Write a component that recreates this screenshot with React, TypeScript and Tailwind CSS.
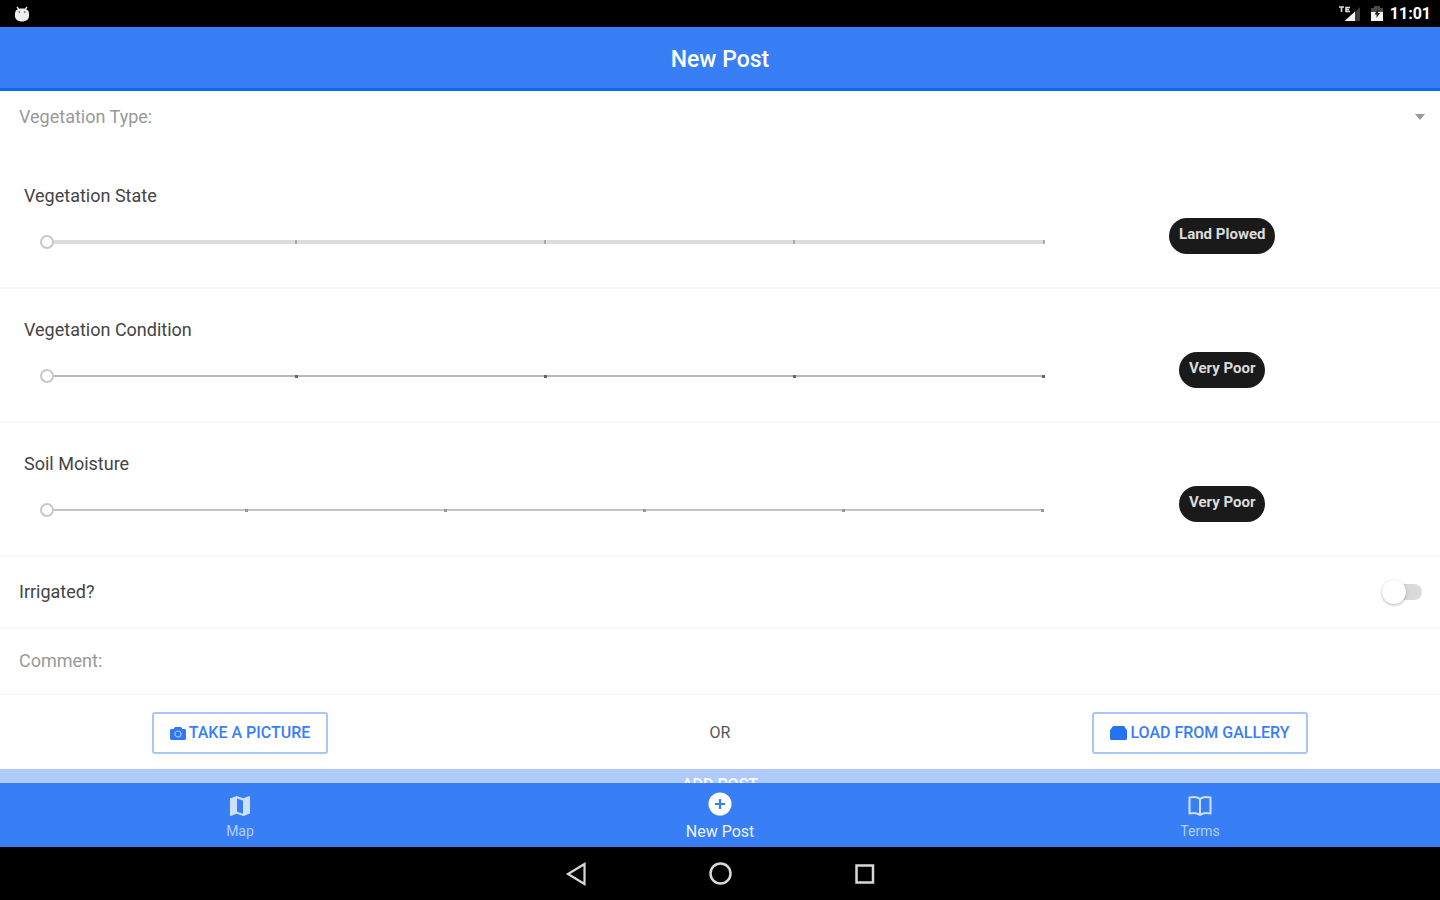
import React, { useState } from 'react';

type SliderRowProps = {
  id: string;
  label: string;
  values: string[];
  trackClass: string;
  tickClass: string;
};

const SliderRow = ({ id, label, values, trackClass, tickClass }: SliderRowProps) => {
  const [value, setValue] = useState(0);

  return (
    <div className="grid h-[134px] grid-cols-[3fr_1fr] border-b-2 border-[#f7f7f7] pr-[46px] pl-5">
      <div className="pt-[27px]">
        <label htmlFor={id} className="block pl-1 text-lg leading-7 text-[#444]">
          {label}
        </label>
        <div className="relative mt-[18px] ml-5 flex h-7 items-center">
          <div className={trackClass}></div>
          <div className="absolute inset-x-[6px] flex items-center justify-between">
            {values.map((_, index) => (
              <span key={index} className={tickClass}></span>
            ))}
          </div>
          <input
            id={id}
            type="range"
            min={0}
            max={values.length - 1}
            value={value}
            onChange={(e) => setValue(Number(e.target.value))}
            className="relative m-0 h-7 w-full appearance-none bg-transparent outline-none [&::-webkit-slider-thumb]:h-[14px] [&::-webkit-slider-thumb]:w-[14px] [&::-webkit-slider-thumb]:appearance-none [&::-webkit-slider-thumb]:rounded-full [&::-webkit-slider-thumb]:border-2 [&::-webkit-slider-thumb]:border-[#c8c8c8] [&::-webkit-slider-thumb]:bg-white"
          />
        </div>
      </div>
      <div className="flex justify-center pt-[63px]">
        <output
          htmlFor={id}
          className="h-9 rounded-full bg-[#1a1a1a] px-[10px] text-[15px] leading-[33px] font-bold text-[#dcdcdc]"
        >
          {values[value]}
        </output>
      </div>
    </div>
  );
};

const StatusBar = () => (
  <div className="flex h-[27px] shrink-0 items-center justify-between bg-black pr-[9px] pl-[14px] text-white">
    <svg width="16" height="16" viewBox="0 0 16 16">
      <path d="M3 1l2 2.6M13 1l-2 2.6" stroke="#eee" strokeWidth="1.4" />
      <path d="M1 7.5C1 4.5 3.5 2.5 8 2.5s7 2 7 5V10c0 3-2.5 5.500-7 5.500S1 13 1 10z" fill="#eee" />
      <circle cx="5.3" cy="6" r="0.9" fill="#777" />
      <circle cx="10.7" cy="6" r="0.9" fill="#777" />
    </svg>
    <div className="flex items-center">
      <svg width="22" height="17" viewBox="0 0 22 17">
        <path d="M21 2v14H7z" fill="#3c3c3c" />
        <path d="M16 6.500V16H5.500z" fill="#f2f2f2" />
        <path d="M0 2h5M2.500 2v5M11 2.500H7v4H11M7 4.500h3" stroke="#ddd" strokeWidth="1.6" fill="none" />
      </svg>
      <svg width="14" height="17" viewBox="0 0 14 17" className="ml-[9px]">
        <path d="M4 1h6v2h3v6H1V3h3z" fill="#4a4a4a" />
        <path d="M1 7h12v9H1z" fill="#f5f5f5" />
        <path d="M8 4L4.500 9.500h2V13l3.500-5H8z" fill="#222" />
      </svg>
      <span className="ml-[6px] text-base leading-6 font-bold">11:01</span>
    </div>
  </div>
);

const TabBar = () => (
  <nav className="grid h-16 shrink-0 grid-cols-3 bg-[#387ef5] text-sm leading-4 text-[#b4cffb]">
    <a href="#map" className="flex flex-col items-center pt-3">
      <svg width="22" height="22" viewBox="0 0 22 22" fill="#cfe0fd">
        <path
          fillRule="evenodd"
          d="M1 3.5L7.5 1l7 2.200L20.200 1q.8-.2.8.6v17L14.500 21l-7-2.200L1.800 21q-.8.2-.8-.6zM8 3.600v13.200l6 2V5.400z"
        />
      </svg>
      <span className="mt-[6px]">Map</span>
    </a>
    <a href="#new" className="flex flex-col items-center pt-[9px] text-base leading-5 text-[#eef4ff]">
      <svg width="24" height="24" viewBox="0 0 24 24">
        <circle cx="12" cy="12" r="11.5" fill="#fff" />
        <path d="M12 7v10M7 12h10" stroke="#387ef5" strokeWidth="2.2" />
      </svg>
      <span className="mt-[6px]">New Post</span>
    </a>
    <a href="#terms" className="flex flex-col items-center pt-3">
      <svg width="24" height="22" viewBox="0 0 24 22" fill="none" stroke="#cfe0fd" strokeWidth="2" strokeLinejoin="round">
        <path d="M12 4C9.500 1.800 5 1.600 1.500 2.500v16c3.500-.8 8-.5 10.500 1.500 2.500-2 7-2.300 10.500-1.500v-16C19 1.600 14.500 1.800 12 4zM12 4v16" />
      </svg>
      <span className="mt-[6px]">Terms</span>
    </a>
  </nav>
);

const SystemNav = () => (
  <div className="flex h-[53px] shrink-0 items-center justify-center gap-[120px] bg-black">
    <button type="button" aria-label="Back">
      <svg width="24" height="24" viewBox="0 0 24 24" fill="none" stroke="#d8d8d8" strokeWidth="2.2">
        <path d="M20.500 2v20L4 12z" />
      </svg>
    </button>
    <button type="button" aria-label="Home">
      <svg width="24" height="24" viewBox="0 0 24 24" fill="none" stroke="#d8d8d8" strokeWidth="2.5">
        <circle cx="12.500" cy="11.500" r="10" />
      </svg>
    </button>
    <button type="button" aria-label="Recent apps">
      <svg width="24" height="24" viewBox="0 0 24 24" fill="none" stroke="#d8d8d8" strokeWidth="2.5">
        <path d="M4.500 3.500H21v17H4.500z" />
      </svg>
    </button>
  </div>
);

const App = () => {
  const [irrigated, setIrrigated] = useState(false);

  return (
    <div className="flex h-screen flex-col overflow-hidden bg-white font-[Roboto,sans-serif]">
      <StatusBar />
      <header className="flex h-16 shrink-0 items-center justify-center border-b-3 border-[#0c6aec] bg-[#387ef5] pt-1">
        <h1 className="text-[23px] leading-8 font-medium text-white">New Post</h1>
      </header>

      <main className="min-h-0 flex-1 overflow-hidden">
        <div className="relative flex h-16 items-start pt-3 pl-[19px]">
          <label htmlFor="type" className="text-lg leading-7 text-[#999]">
            Vegetation Type:
          </label>
          <select id="type" defaultValue="" className="h-7 flex-1 appearance-none bg-transparent outline-none">
            <option value=""></option>
            <option value="crop">Crop</option>
            <option value="pasture">Pasture</option>
          </select>
          <svg width="10" height="6" viewBox="0 0 10 6" className="pointer-events-none absolute top-[23px] right-[15px]">
            <path d="M0 0h10L5 6z" fill="#999" />
          </svg>
        </div>

        <SliderRow
          id="state"
          label="Vegetation State"
          values={['Land Plowed', 'Planted', 'Emerging', 'Growing', 'Harvested']}
          trackClass="absolute inset-x-[7px] h-1 bg-[#dcdcdc]"
          tickClass="h-1 w-[2px] bg-[#aaa]"
        />
        <SliderRow
          id="condition"
          label="Vegetation Condition"
          values={['Very Poor', 'Poor', 'Fair', 'Good', 'Excellent']}
          trackClass="absolute inset-x-[7px] h-[2px] bg-[#b8b8b8]"
          tickClass="h-[3px] w-[3px] bg-[#666]"
        />
        <SliderRow
          id="moisture"
          label="Soil Moisture"
          values={['Very Poor', 'Poor', 'Fair', 'Good', 'Very Good', 'Excellent']}
          trackClass="absolute inset-x-[7px] h-[2px] bg-[#c4c4c4]"
          tickClass="h-[3px] w-[3px] bg-[#999]"
        />

        <div className="flex h-[72px] items-center justify-between border-b-2 border-[#f9f9f9] pr-[18px] pl-[19px]">
          <label htmlFor="irrigated" className="text-lg leading-7 text-[#444]">
            Irrigated?
          </label>
          <input
            id="irrigated"
            type="checkbox"
            role="switch"
            checked={irrigated}
            onChange={(e) => setIrrigated(e.target.checked)}
            className="relative h-4 w-9 appearance-none rounded-full bg-[#dadada] before:absolute before:-top-1 before:-left-1 before:h-6 before:w-6 before:rounded-full before:bg-white before:shadow-[0_1px_3px_rgba(0,0,0,0.3)] checked:bg-[#9bbefa] checked:before:left-4"
          />
        </div>

        <div className="flex h-[66px] items-center border-b-2 border-[#f9f9f9] pl-[19px]">
          <label htmlFor="comment" className="text-lg leading-7 text-[#999]">
            Comment:
          </label>
          <input id="comment" type="text" className="h-9 flex-1 pl-4 text-lg text-[#444] outline-none" />
        </div>

        <div className="grid h-[74px] grid-cols-3 items-center justify-items-center pt-[2px] text-base text-[#555]">
          <button
            type="button"
            className="flex h-[42px] items-center gap-[3px] rounded-[3px] border-2 border-[#a9c6fb] px-4 font-medium text-[#387ef5]"
          >
            <svg width="16" height="14" viewBox="0 0 16 14">
              <path d="M5 1h6l1.500 2H15l1 1v9l-1 1H1l-1-1V4l1-1h2.500z" fill="#2f78f0" />
              <circle cx="8" cy="8" r="3" fill="none" stroke="#a9c6fb" strokeWidth="1.2" />
            </svg>
            TAKE A PICTURE
          </button>
          <span>OR</span>
          <button
            type="button"
            className="flex h-[42px] items-center gap-[3px] rounded-[3px] border-2 border-[#a9c6fb] px-4 font-medium text-[#387ef5]"
          >
            <svg width="17" height="14" viewBox="0 0 17 14">
              <path d="M3 0h11l2 3 1 1v9l-1 1H1l-1-1V4l1-1z" fill="#2474f2" />
            </svg>
            LOAD FROM GALLERY
          </button>
        </div>

        <button
          type="submit"
          className="flex h-11 w-full items-start justify-center bg-[#afcbfb] pt-[6px] text-base leading-5 font-medium text-white"
        >
          ADD POST
        </button>
      </main>

      <TabBar />
      <SystemNav />
    </div>
  );
};

export default App;
